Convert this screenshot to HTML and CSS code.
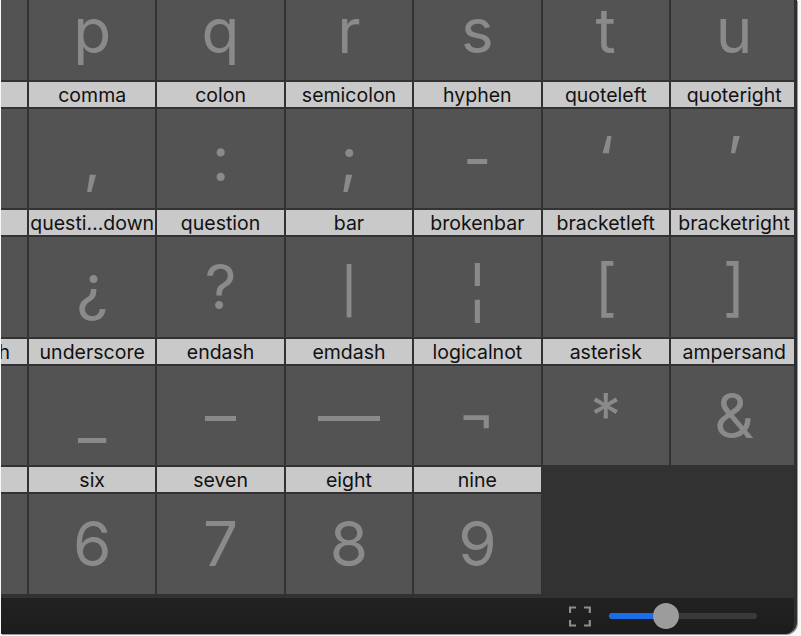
FILE: index.html
```html
<!DOCTYPE html>
<html>
<head>
<meta charset="utf-8">
<link rel="stylesheet" href="styles.css">
</head>
<body>
<div class="window">
  <div class="viewport">
    <div class="grid">
      <div class="cell"><div class="label">o</div><div class="glyph">o</div></div>
      <div class="cell"><div class="label">p</div><div class="glyph">p</div></div>
      <div class="cell"><div class="label">q</div><div class="glyph">q</div></div>
      <div class="cell"><div class="label">r</div><div class="glyph">r</div></div>
      <div class="cell"><div class="label">s</div><div class="glyph">s</div></div>
      <div class="cell"><div class="label">t</div><div class="glyph">t</div></div>
      <div class="cell"><div class="label">u</div><div class="glyph">u</div></div>

      <div class="cell"><div class="label">period</div><div class="glyph">.</div></div>
      <div class="cell"><div class="label">comma</div><div class="glyph">,</div></div>
      <div class="cell"><div class="label">colon</div><div class="glyph">:</div></div>
      <div class="cell"><div class="label">semicolon</div><div class="glyph">;</div></div>
      <div class="cell"><div class="label">hyphen</div><div class="glyph">-</div></div>
      <div class="cell"><div class="label">quoteleft</div><div class="glyph">‘</div></div>
      <div class="cell"><div class="label">quoteright</div><div class="glyph">’</div></div>

      <div class="cell"><div class="label">exclam</div><div class="glyph">!</div></div>
      <div class="cell"><div class="label">questi…down</div><div class="glyph">¿</div></div>
      <div class="cell"><div class="label">question</div><div class="glyph">?</div></div>
      <div class="cell"><div class="label">bar</div><div class="glyph"><span class="short">|</span></div></div>
      <div class="cell"><div class="label">brokenbar</div><div class="glyph"><span class="broken">¦</span></div></div>
      <div class="cell"><div class="label">bracketleft</div><div class="glyph">[</div></div>
      <div class="cell"><div class="label">bracketright</div><div class="glyph">]</div></div>

      <div class="cell"><div class="label">backslash</div><div class="glyph">\</div></div>
      <div class="cell"><div class="label">underscore</div><div class="glyph">_</div></div>
      <div class="cell"><div class="label">endash</div><div class="glyph">–</div></div>
      <div class="cell"><div class="label">emdash</div><div class="glyph">—</div></div>
      <div class="cell"><div class="label">logicalnot</div><div class="glyph">¬</div></div>
      <div class="cell"><div class="label">asterisk</div><div class="glyph">*</div></div>
      <div class="cell"><div class="label">ampersand</div><div class="glyph">&amp;</div></div>

      <div class="cell"><div class="label">five</div><div class="glyph">5</div></div>
      <div class="cell"><div class="label">six</div><div class="glyph">6</div></div>
      <div class="cell"><div class="label">seven</div><div class="glyph">7</div></div>
      <div class="cell"><div class="label">eight</div><div class="glyph">8</div></div>
      <div class="cell"><div class="label">nine</div><div class="glyph">9</div></div>
    </div>
  </div>
  <div class="bottombar">
    <svg class="fullscreen" width="22" height="21" viewBox="0 0 22 21" fill="none" stroke="#8e8e8e" stroke-width="2.2">
      <path d="M1 7V1.5H7"/>
      <path d="M15 1.5H20.8V7"/>
      <path d="M1 14V19.5H7"/>
      <path d="M15 19.5H20.8V14"/>
    </svg>
    <div class="slider">
      <div class="track"><div class="fill" style="width:56px"></div></div>
      <div class="thumb" style="left:44px"></div>
    </div>
  </div>
</div>
</body>
</html>
```

FILE: styles.css
```css
html, body {
  margin: 0;
  padding: 0;
  background: #f7f7f7;
}

body {
  width: 801px;
  height: 636px;
  overflow: hidden;
  font-family: Inter, "Helvetica Neue", Arial, sans-serif;
}

.window {
  margin-left: 1px;
  width: 793px;
  height: 634px;
  border-right: 3px solid #2f2f2f;
  border-bottom-right-radius: 12px;
  overflow: hidden;
  background: #1f1f1f;
  display: flex;
  flex-direction: column;
  box-shadow: 1px 1px 0 #9a9a9a;
}

.viewport {
  height: 598px;
  flex: none;
  overflow: hidden;
  background: #323232;
}

.grid {
  display: grid;
  grid-template-columns: repeat(7, 126.4px);
  grid-auto-rows: 126.4px;
  gap: 2px;
  margin-left: -100.4px;
  margin-top: -46.4px;
}

.cell {
  display: flex;
  flex-direction: column;
  gap: 2px;
}

.label {
  height: 25px;
  box-sizing: border-box;
  padding-top: 1px;
  flex: none;
  background: #c9c9c9;
  color: #111111;
  font-size: 19.5px;
  line-height: 25px;
  text-align: center;
  white-space: nowrap;
  overflow: hidden;
}

.glyph {
  flex: 1;
  background: #535353;
  color: #8a8a8a;
  font-size: 62px;
  line-height: 99px;
  text-align: center;
  overflow: hidden;
}

.short {
  display: inline-block;
  transform: translateY(4px) scaleY(0.72);
}

.broken {
  display: inline-block;
  transform: translateY(2px) scaleY(1.12);
}

.bottombar {
  flex: 1;
  background: linear-gradient(#222222, #1c1c1c);
  display: flex;
  align-items: center;
  padding-left: 568px;
  gap: 18px;
}

.fullscreen {
  display: block;
  flex: none;
}

.slider {
  position: relative;
  width: 148px;
  height: 26px;
}

.track {
  position: absolute;
  left: 0;
  right: 0;
  top: 10px;
  height: 6px;
  border-radius: 3px;
  background: #3a3a3a;
  overflow: hidden;
}

.fill {
  height: 100%;
  background: #1b6ee8;
}

.thumb {
  position: absolute;
  top: 0;
  width: 26px;
  height: 26px;
  border-radius: 50%;
  background: #9c9c9c;
  box-shadow: 0 0 1px rgba(0,0,0,0.6);
}
```
